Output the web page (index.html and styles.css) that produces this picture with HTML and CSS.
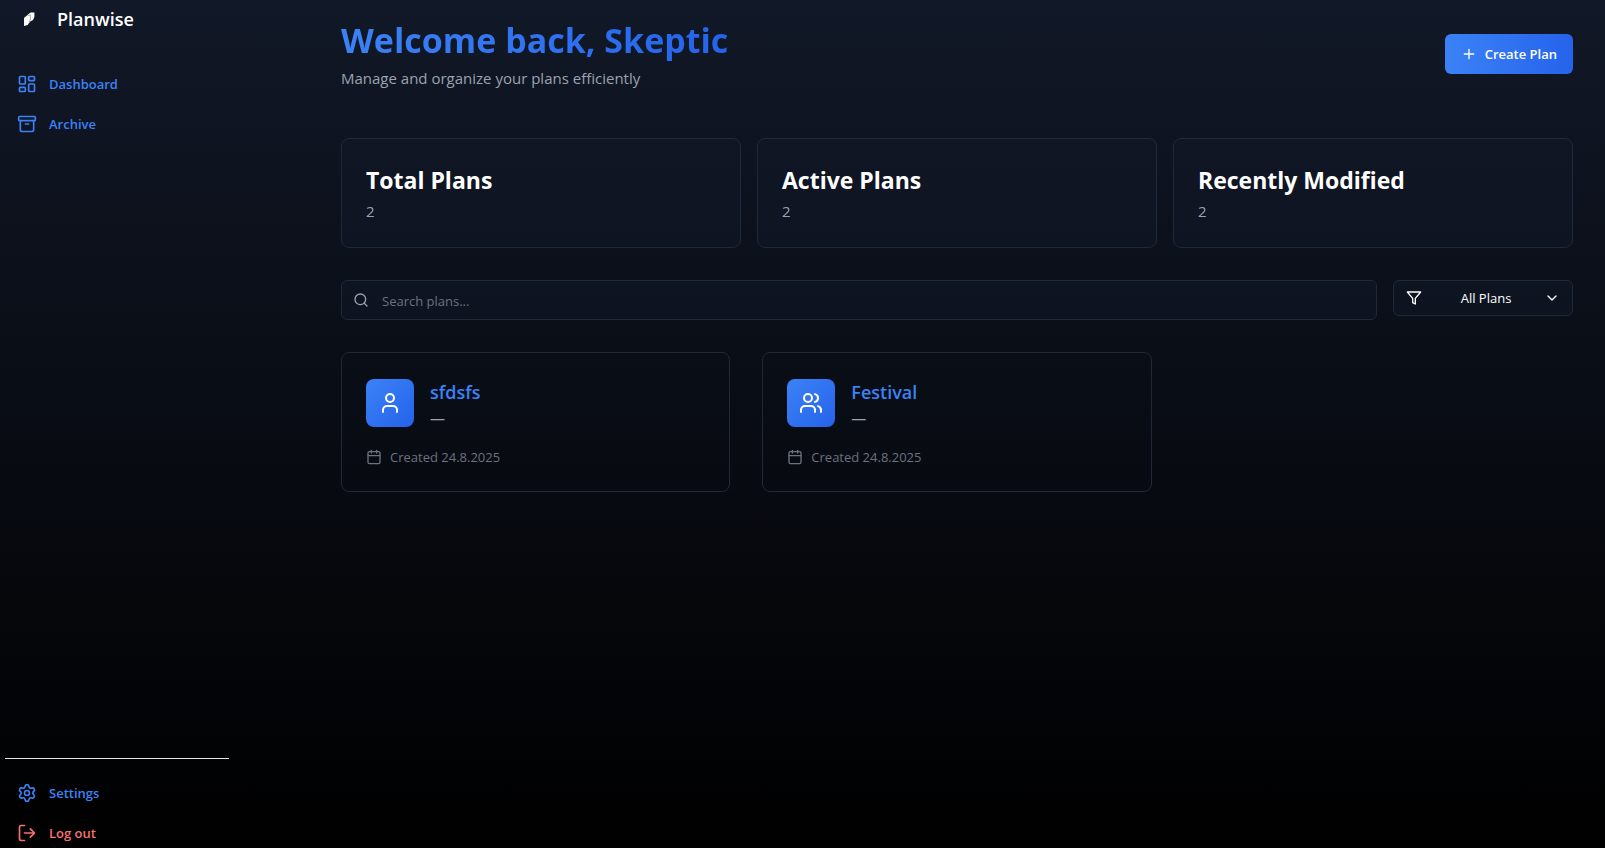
FILE: index.html
```html
<!DOCTYPE html>
<html lang="en">
<head>
<meta charset="utf-8">
<meta name="viewport" content="width=device-width, initial-scale=1">
<title>Planwise</title>
<link rel="stylesheet" href="styles.css">
</head>
<body>
<div class="app">
  <aside class="sidebar">
    <a class="brand" href="#">
      <svg class="brand-mark" viewBox="0 0 16 16" aria-hidden="true"><path d="M3 7 6.4 4 9.6 1.4H13.4V6L12 9 9.2 10.6 6.6 14 3 15z" fill="#fff"/><path d="M6.4 4.4 9.4 4V8.4L8.4 11" fill="none" stroke="#8d929c" stroke-width=".8"/></svg>
      <span>Planwise</span>
    </a>
    <nav class="nav">
      <a class="nav-link" href="#"><svg class="icon" viewBox="0 0 24 24"><rect x="3" y="3" width="7" height="9" rx="1"/><rect x="14" y="3" width="7" height="5" rx="1"/><rect x="14" y="12" width="7" height="9" rx="1"/><rect x="3" y="16" width="7" height="5" rx="1"/></svg>Dashboard</a>
      <a class="nav-link" href="#"><svg class="icon" viewBox="0 0 24 24"><rect x="2" y="3" width="20" height="5" rx="1"/><path d="M4 8v11a2 2 0 0 0 2 2h12a2 2 0 0 0 2-2V8M10 12h4"/></svg>Archive</a>
    </nav>
    <div class="nav nav-bottom">
      <a class="nav-link" href="#"><svg class="icon" viewBox="0 0 24 24"><path d="M9.671 4.136a2.34 2.34 0 0 1 4.659 0 2.34 2.34 0 0 0 3.319 1.915 2.34 2.34 0 0 1 2.33 4.033 2.34 2.34 0 0 0 0 3.831 2.34 2.34 0 0 1-2.33 4.033 2.34 2.34 0 0 0-3.319 1.915 2.34 2.34 0 0 1-4.659 0 2.34 2.34 0 0 0-3.32-1.915 2.34 2.34 0 0 1-2.33-4.033 2.34 2.34 0 0 0 0-3.831A2.34 2.34 0 0 1 6.35 6.051a2.34 2.34 0 0 0 3.319-1.915"/><circle cx="12" cy="12" r="3"/></svg>Settings</a>
      <button class="nav-link logout" type="button"><svg class="icon" viewBox="0 0 24 24"><path d="M9 21H5a2 2 0 0 1-2-2V5a2 2 0 0 1 2-2h4M16 17l5-5-5-5M21 12H9"/></svg>Log out</button>
    </div>
  </aside>

  <main class="main">
    <header class="page-header">
      <div>
        <h1 class="title">Welcome back, Skeptic</h1>
        <p class="subtitle">Manage and organize your plans efficiently</p>
      </div>
      <button class="create" type="button"><svg class="icon" viewBox="0 0 24 24"><path d="M5 12h14M12 5v14"/></svg>Create Plan</button>
    </header>

    <section class="stats">
      <div class="stat"><h2>Total Plans</h2><p>2</p></div>
      <div class="stat"><h2>Active Plans</h2><p>2</p></div>
      <div class="stat"><h2>Recently Modified</h2><p>2</p></div>
    </section>

    <div class="toolbar">
      <label class="search">
        <svg class="icon" viewBox="0 0 24 24"><circle cx="11" cy="11" r="8"/><path d="m21 21-4.3-4.3"/></svg>
        <input type="search" placeholder="Search plans..." aria-label="Search plans">
      </label>
      <label class="filter">
        <svg class="icon" viewBox="0 0 24 24"><path d="M22 3H2l8 9.46V19l4 2v-8.54z"/></svg>
        <select aria-label="Filter plans"><option>All Plans</option></select>
        <svg class="icon" viewBox="0 0 24 24"><path d="m6 9 6 6 6-6"/></svg>
      </label>
    </div>

    <section class="plans">
      <article class="plan">
        <div class="plan-head">
          <span class="tile"><svg class="icon" viewBox="0 0 24 24"><path d="M19 21v-2a4 4 0 0 0-4-4H9a4 4 0 0 0-4 4v2"/><circle cx="12" cy="7" r="4"/></svg></span>
          <div><h3>sfdsfs</h3><p>—</p></div>
        </div>
        <p class="created"><svg class="icon" viewBox="0 0 24 24"><path d="M8 2v4M16 2v4M3 10h18"/><rect x="3" y="4" width="18" height="18" rx="2"/></svg>Created 24.8.2025</p>
      </article>
      <article class="plan">
        <div class="plan-head">
          <span class="tile"><svg class="icon" viewBox="0 0 24 24"><path d="M16 21v-2a4 4 0 0 0-4-4H6a4 4 0 0 0-4 4v2M22 21v-2a4 4 0 0 0-3-3.87M16 3.13a4 4 0 0 1 0 7.75"/><circle cx="9" cy="7" r="4"/></svg></span>
          <div><h3>Festival</h3><p>—</p></div>
        </div>
        <p class="created"><svg class="icon" viewBox="0 0 24 24"><path d="M8 2v4M16 2v4M3 10h18"/><rect x="3" y="4" width="18" height="18" rx="2"/></svg>Created 24.8.2025</p>
      </article>
    </section>
  </main>
</div>
</body>
</html>
```
FILE: styles.css
```css
* {
  box-sizing: border-box;
  margin: 0;
}

body {
  font-family: "Open Sans", "Noto Sans", sans-serif;
  font-size: 15px;
  line-height: 24px;
  color: #fff;
  background: #000;
}

a {
  color: inherit;
  text-decoration: none;
}

button,
input,
select {
  font: inherit;
  color: inherit;
  background: none;
  border: 0;
  padding: 0;
}

.icon {
  width: 16px;
  height: 16px;
  flex: none;
  fill: none;
  stroke: currentColor;
  stroke-width: 2;
  stroke-linecap: round;
  stroke-linejoin: round;
}

.app {
  display: grid;
  grid-template-columns: 309px minmax(0, 1fr);
  min-height: 100vh;
  background: linear-gradient(to bottom, #111827, #000);
}

.sidebar {
  display: flex;
  flex-direction: column;
  width: 234px;
  padding: 4px 5px 1px;
}

.brand {
  display: flex;
  align-items: center;
  gap: 20px;
  padding-left: 16px;
  height: 30px;
  font-size: 18px;
  font-weight: 600;
}

.brand-mark {
  width: 16px;
  height: 16px;
}

.nav {
  display: flex;
  flex-direction: column;
  gap: 12px;
  padding-top: 36px;
}

.nav-link {
  display: flex;
  align-items: center;
  gap: 12px;
  height: 28px;
  padding-left: 12px;
  font-size: 13px;
  font-weight: 600;
  color: #3b82f6;
}

.nav-link .icon {
  width: 20px;
  height: 20px;
}

.nav-bottom {
  margin-top: auto;
  padding-top: 20px;
  border-top: 1px solid #e5e7eb;
}

.logout {
  color: #f87171;
  cursor: pointer;
}

.main {
  padding: 18px 32px;
}

.page-header {
  display: flex;
  align-items: center;
  justify-content: space-between;
  margin-bottom: 48px;
}

.title {
  width: fit-content;
  margin-bottom: 4px;
  font-size: 34px;
  line-height: 44px;
  font-weight: 700;
  color: transparent;
  background: linear-gradient(to right, #3b82f6, #2563eb);
  background-clip: text;
}

.subtitle {
  color: #9ca3af;
}

.create {
  display: flex;
  align-items: center;
  justify-content: center;
  gap: 8px;
  height: 40px;
  padding: 0 16px;
  font-size: 13px;
  font-weight: 600;
  border-radius: 6px;
  background: linear-gradient(to right, #3b82f6, #2563eb);
  cursor: pointer;
}

.stats {
  display: grid;
  grid-template-columns: repeat(3, minmax(0, 1fr));
  gap: 16px;
  margin-bottom: 32px;
}

.stat {
  padding: 24px;
  border: 1px solid #1f2937;
  border-radius: 8px;
  background: rgba(17, 24, 39, 0.5);
}

.stat h2 {
  margin-bottom: 2px;
  font-size: 23px;
  line-height: 34px;
  font-weight: 700;
}

.stat p {
  color: #9ca3af;
}

.toolbar {
  display: flex;
  align-items: flex-start;
  gap: 16px;
  margin-bottom: 32px;
}

.search,
.filter {
  display: flex;
  align-items: center;
  padding: 0 12px;
  border: 1px solid #1f2937;
  border-radius: 6px;
  background: rgba(17, 24, 39, 0.5);
  font-size: 13px;
}

.search {
  flex: 1;
  gap: 13px;
  height: 40px;
  padding-left: 11px;
  color: #9ca3af;
}

.search input {
  flex: 1;
  padding-top: 2px;
  outline: 0;
  color: #fff;
}

.search input::placeholder {
  color: #6b7280;
}

.filter {
  width: 180px;
  height: 36px;
}

.filter select {
  flex: 1;
  padding-left: 6px;
  appearance: none;
  outline: 0;
  text-align: center;
  text-align-last: center;
}

.plans {
  display: grid;
  grid-template-columns: repeat(3, minmax(0, 1fr));
  gap: 32px;
}

.plan {
  padding: 24px;
  border: 1px solid #1f2937;
  border-radius: 8px;
}

.plan-head {
  display: flex;
  align-items: center;
  gap: 16px;
  margin-bottom: 18px;
}

.tile {
  display: grid;
  place-items: center;
  width: 48px;
  height: 48px;
  border-radius: 8px;
  background: linear-gradient(to bottom right, #3b82f6, #2563eb);
}

.tile .icon {
  width: 24px;
  height: 24px;
}

.plan h3 {
  font-size: 18px;
  line-height: 30px;
  font-weight: 600;
  color: #3b82f6;
}

.plan-head p {
  line-height: 22px;
  color: #9ca3af;
}

.created {
  display: flex;
  align-items: center;
  gap: 8px;
  font-size: 13px;
  line-height: 20px;
  color: #6b7280;
}
```
